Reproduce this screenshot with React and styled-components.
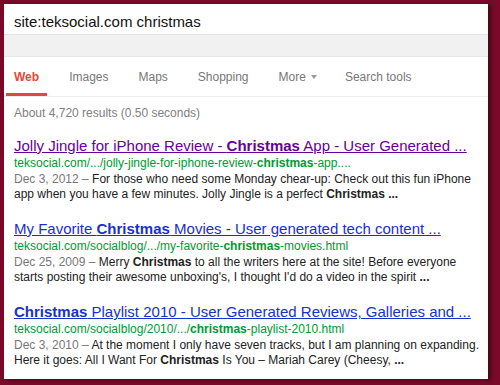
import React from 'react'
import styled, { createGlobalStyle } from 'styled-components'

const GlobalStyle = createGlobalStyle`
    html, body {
        margin: 0;
        padding: 0;
        background: #7b0a2a;
    }
    * {
        box-sizing: border-box;
    }
`

const results = [
    {
        visited: true,
        title: [['Jolly Jingle for iPhone Review - '], ['Christmas', true], [' App - User Generated ...']],
        url: [['teksocial.com/.../jolly-jingle-for-iphone-review-'], ['christmas', true], ['-app....']],
        date: 'Dec 3, 2012',
        lines: [
            [[' For those who need some Monday chear-up: Check out this fun iPhone']],
            [['app when you have a few minutes. Jolly Jingle is a perfect '], ['Christmas ...', true]],
        ],
    },
    {
        title: [['My Favorite '], ['Christmas', true], [' Movies - User generated tech content ...']],
        url: [['teksocial.com/socialblog/.../my-favorite-'], ['christmas', true], ['-movies.html']],
        date: 'Dec 25, 2009',
        lines: [
            [[' Merry '], ['Christmas', true], [' to all the writers here at the site! Before everyone']],
            [["starts posting their awesome unboxing's, I thought I'd do a video in the spirit "], ['...', true]],
        ],
    },
    {
        title: [['Christmas', true], [' Playlist 2010 - User Generated Reviews, Galleries and ...']],
        url: [['teksocial.com/socialblog/2010/.../'], ['christmas', true], ['-playlist-2010.html']],
        date: 'Dec 3, 2010',
        lines: [
            [[' At the moment I only have seven tracks, but I am planning on expanding.']],
            [['Here it goes: All I Want For '], ['Christmas', true], [' Is You \u2013 Mariah Carey (Cheesy, '], ['...', true]],
        ],
    },
]

const tabs = ['Web', 'Images', 'Maps', 'Shopping', 'More', 'Search tools']

function Parts({ parts }) {
    return parts.map(([text, bold], i) => bold ? <b key={i}>{text}</b> : <span key={i}>{text}</span>)
}

export default function App() {
    return (
        <Frame>
            <GlobalStyle />
            <Page>
                <SearchBar>site:teksocial.com christmas</SearchBar>
                <GreyBand />
                <TabBar>
                    {tabs.map((tab, i) => (
                        <Tab key={tab} active={i === 0}>
                            {tab}
                            {tab === 'More' && <Caret />}
                        </Tab>
                    ))}
                </TabBar>
                <Stats>About 4,720 results (0.50 seconds)</Stats>
                <ResultList>
                    {results.map((r, i) => (
                        <Result key={i}>
                            <Title visited={r.visited}><Parts parts={r.title} /></Title>
                            <Url><Parts parts={r.url} /></Url>
                            <Snippet>
                                <Line>
                                    <DateText>{r.date} &ndash;</DateText>
                                    <Parts parts={r.lines[0]} />
                                </Line>
                                <Line><Parts parts={r.lines[1]} /></Line>
                            </Snippet>
                        </Result>
                    ))}
                </ResultList>
            </Page>
        </Frame>
    )
}

const Frame = styled.div`
    width: 500px;
    height: 385px;
    padding: 4px 12px 6px 4px;
    font-family: "Liberation Sans", Arial, sans-serif;
`

const Page = styled.div`
    width: 484px;
    height: 375px;
    background: #fff;
    box-shadow: 3px 1px 4px rgba(0, 0, 0, 0.45);
    overflow: hidden;
`

const SearchBar = styled.div`
    height: 31px;
    padding: 5px 10px 0;
    display: flex;
    align-items: center;
    font-size: 15px;
    color: #111;
    border-bottom: 1px solid #e3e3e3;
`

const GreyBand = styled.div`
    height: 22px;
    background: #f1f1f1;
    border-bottom: 1px solid #e8e8e8;
`

const TabBar = styled.div`
    height: 40px;
    display: flex;
    align-items: stretch;
    padding-left: 2px;
    border-bottom: 1px solid #ebebeb;
`

const Tab = styled.div`
    display: flex;
    align-items: center;
    gap: 5px;
    padding: 3px 8px 0;
    margin-right: 14px;
    font-size: 12px;
    font-weight: ${props => props.active ? 'bold' : 'normal'};
    color: ${props => props.active ? '#dd4b39' : '#777'};
    border-bottom: 3px solid ${props => props.active ? '#dd4b39' : 'transparent'};
    &:nth-child(5) {
        margin-right: 12px;
    }
`

const Caret = styled.span`
    width: 0;
    height: 0;
    margin-top: 1px;
    border-left: 3px solid transparent;
    border-right: 3px solid transparent;
    border-top: 4px solid #999;
`

const Stats = styled.div`
    padding: 9px 10px 0;
    height: 40px;
    font-size: 12px;
    color: #808080;
`

const ResultList = styled.div`
    padding: 0 10px;
    display: flex;
    flex-direction: column;
    gap: 18px;
`

const Result = styled.div`
    display: flex;
    flex-direction: column;
`

const Title = styled.div`
    font-size: 15px;
    line-height: 18px;
    color: ${props => props.visited ? '#660099' : '#1a2fd0'};
    text-decoration: underline;
    white-space: nowrap;
`

const Url = styled.div`
    font-size: 12px;
    line-height: 17px;
    color: #009933;
    white-space: nowrap;
`

const Snippet = styled.div`
    font-size: 12px;
    line-height: 15px;
    color: #222;
`

const Line = styled.div`
    white-space: nowrap;
`

const DateText = styled.span`
    color: #777;
`
